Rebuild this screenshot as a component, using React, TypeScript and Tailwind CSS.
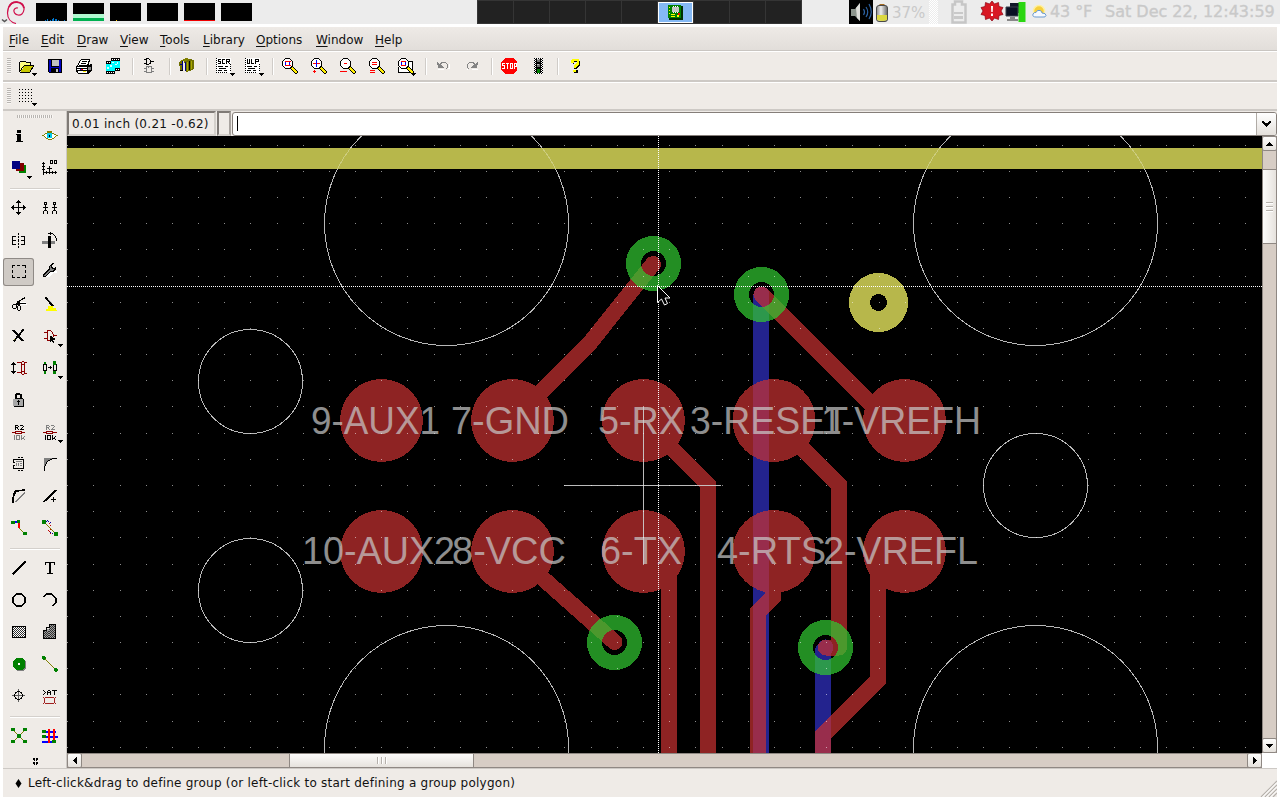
import React from "react";

/* A shape is [colour, path] for a fill or [colour, path, width] for a stroke. */
type Shape = [string, string, number?];

const K = "#000";
const G = "#008000";
const R = "#8b0000";
const N = "#000080";
const O = "#808000";

function Icon({ x, y, w, h, shapes }: { x: number; y: number; w: number; h: number; shapes: Shape[] }) {
  return (
    <svg width={w} height={h} viewBox={`${x} ${y} ${w} ${h}`} className="block shrink-0" shapeRendering="crispEdges" aria-hidden="true">
      {shapes.map(([c, d, s], i) =>
        s ? <path key={i} d={d} fill="none" stroke={c} strokeWidth={s} /> : <path key={i} d={d} fill={c} />
      )}
    </svg>
  );
}

const drop = (x: number, y: number): Shape => [K, `M${x} ${y}h5v1h-1v1h-1v1h-1v-1h-1v-1h-1z`];

const magnifier = (x: number): Shape[] => [
  ["#fff", `M${x + 3} 59h5l3 3v4l-3 3h-5l-3-3v-4z`],
  [K, `M${x + 3} 58.5h5M${x + 3} 68.5h5M${x + 0.5} 61v5M${x + 10.5} 61v5M${x + 1} 60.5h1M${x + 2} 59.5h1M${x + 8} 59.5h1M${x + 9} 60.5h1M${x + 1} 66.5h1M${x + 2} 67.5h1M${x + 8} 67.5h1M${x + 9} 66.5h1`, 1],
  [K, `M${x + 9.5} 67.5l6 6`, 3.6],
  ["#ffee00", `M${x + 10} 68l5 5`, 1.8],
];

/* Checkerboard of single pixels over a rectangle. */
const checker = (x: number, y: number, w: number, h: number) => {
  let d = "";
  for (let j = 0; j < h; j++) for (let i = j % 2; i < w; i += 2) d += `M${x + i} ${y + j}h1v1h-1z`;
  return d;
};

const topIcons: (Shape[] | null)[] = [
  [
    ["#ffff80", "M20 63l2-2h4l1 2h4v3h-7l-4 6z"],
    [K, "M19.5 62v10M20 61.5h6M26 62.5h5M30.5 63v3", 1],
    ["#c8c800", "M24 66h10l-4 7h-10z"],
    [K, "M24 65.5h10M20 72.5h10M33.5 66l-4 7M23.5 66l-4 6", 1],
    drop(32, 73),
  ],
  [
    [K, "M48 59h14v14h-13l-1-1z"],
    ["#0000c0", "M49 60h2v12h-2zM59 60h2v12h-2zM51 67h8v1h-8z"],
    ["#c0c0c0", "M52 60h7v6h-7zM56 69h2v3h-2z"],
    ["#000", "M52 69h4v4h-4z"],
  ],
  [
    ["#fff", "M81 59h9l-3 7h-9z"],
    [K, "M81 59.5h9M80.5 60l-3 6M89.5 60l-2 6M82 61.5h5M81 63.5h5", 1],
    [K, "M76 66h3v-1h9l4-1v6l-4 4h-10l-2-2z"],
    ["#fff", "M77 67h10v1h-10zM77 69h10v1h-10zM78 71h9v2h-9z"],
    ["#0000ff", "M80 69h1v1h-1z"],
    ["#f00", "M81 69h2v1h-2z"],
    ["#ffee00", "M83 71h3v1h-3z"],
    ["#888", "M88 67h3v3h-3z"],
  ],
  [
    [K, "M111 58h9v13h-9zM106 61h9v13h-9z"],
    ["#00ffff", "M111 61h9v7h-9zM106 64h9v7h-9z"],
    ["#d8ffff", "M112 62h2v1h-2zM117 62h1v2h-1zM115 64h2v1h-2zM110 65h2v2h-2zM107 67h2v2h-2z"],
    ["#fff", "M112 59h1v1h-1zM114 59h1v1h-1zM116 59h1v1h-1zM118 59h1v1h-1zM107 62h1v1h-1zM109 62h1v1h-1zM116 69h1v1h-1zM118 69h1v1h-1zM107 72h1v1h-1zM109 72h1v1h-1zM111 72h1v1h-1zM113 72h1v1h-1z"],
  ],
  null,
  [
    [K, "M146.5 58v7M146 58.5h3M146 64.5h3M150.5 59.5v4M149.5 59v1M149.5 63v1M144 59.5h2M144 63.5h2M151 61.5h3", 1],
    ["#808080", "M146.5 66.5v6h5v-6zM148.5 66v2M144 68.5h2M144 71.5h2M152 68.5h2M152 71.5h2", 1],
  ],
  null,
  [
    ["#707000", "M179 62l3-2v11l-2-1zM184 60l6-1v12l-4 1zM190 59l4 1v9l-4 2z"],
    ["#808000", "M180 61l6-3 4 1-4 2z"],
    ["#a8a800", "M187 62h1v9h-1zM191 61h1v8h-1z"],
    ["#000080", "M182 61h1v9h-1zM185 62h1v9h-1zM180 64h2v1h-2z"],
    [K, "M189.500 61v9M180 70.500h3", 1],
  ],
  null,
  [
    ["#fff", "M216 58h15v15h-15z"],
    [K, "M216 58h1v1h-1zM216 60h1v1h-1zM216 62h1v1h-1zM216 64h1v1h-1zM216 66h1v1h-1zM216 68h1v1h-1zM216 70h1v1h-1zM216 72h1v1h-1zM230 64h1v1h-1zM230 66h1v1h-1zM230 68h1v1h-1zM230 70h1v1h-1zM218 72h1v1h-1zM220 72h1v1h-1zM222 72h1v1h-1zM224 72h1v1h-1zM226 72h1v1h-1z"],
    [K, "M218 59h3v1h-2v1h2v3h-3v-1h2v-1h-2zM222 59h3v1h-2v3h2v1h-3zM226 59h4v3h-1v1h1v1h-1v-1h-1v-1h-1v2h-1z"],
    ["#fff", "M227 60h2v1h-2z"],
    [K, "M218 66h5v1h-5zM225 66h3v1h-3zM219 68h7v1h-7zM218 70h4v1h-4zM224 70h3v1h-3z"],
    drop(230, 73),
  ],
  [
    ["#fff", "M245 58h15v15h-15z"],
    [K, "M245 58h1v1h-1zM245 60h1v1h-1zM245 62h1v1h-1zM245 64h1v1h-1zM245 66h1v1h-1zM245 68h1v1h-1zM245 70h1v1h-1zM245 72h1v1h-1zM259 64h1v1h-1zM259 66h1v1h-1zM259 68h1v1h-1zM259 70h1v1h-1zM247 72h1v1h-1zM249 72h1v1h-1zM251 72h1v1h-1zM253 72h1v1h-1zM255 72h1v1h-1z"],
    [K, "M247 59h1v4h1v-4h1v5h-3zM251 59h1v4h2v1h-3zM255 59h4v3h-3v2h-1z"],
    ["#fff", "M256 60h2v1h-2z"],
    [K, "M247 66h5v1h-5zM254 66h3v1h-3zM248 68h7v1h-7zM247 70h4v1h-4zM253 70h3v1h-3z"],
    drop(259, 73),
  ],
  null,
  [...magnifier(282), ["#f00", "M285 61.500h6M285 65.500h6", 1], ["#00f", "M285.500 62v3M289.500 62v3", 1]],
  [...magnifier(311), ["#00f", "M316.500 60v7", 1], ["#f00", "M313 63.500h3M317 63.500h3M313 71.500h3M314.500 70v3", 1]],
  [...magnifier(340), ["#f00", "M344 63.500h3M340 71.500h7", 1]],
  [...magnifier(369), ["#f00", "M372 62.500h5M372 64.500h5M370 70.500h5M370 72.500h5", 1]],
  [
    ["#fff", "M405 61h8v11h-14v-4z"],
    [K, "M408 61.5h4.500v11M398.500 67v5.500h13", 1],
    ...magnifier(398),
    ["#f00", "M401 61.500h5M401 65.500h5", 1],
    ["#00f", "M401.500 62v3M405.500 62v3", 1],
    drop(411, 73),
  ],
  null,
  [
    ["#fff", "M438 69h6v1h-6zM449 64h1v5h-2v-1h1z"],
    ["#848484", "M437 62h1v1h1v1h1v-1h1v-1h5v1h1v1h1v4h-1v1h-1v-1h1v-4h-1v-1h-4v1h-1v1h1v1h1v1h1v1h-6z"],
  ],
  [
    ["#fff", "M472 69h6v1h-6zM467 69h1v1h-1z"],
    ["#848484", "M478 62h-1v1h-1v1h-1v-1h-1v-1h-5v1h-1v1h-1v4h1v1h1v-1h-1v-4h1v-1h4v1h1v1h-1v1h-1v1h-1v1h6z"],
  ],
  null,
  [
    ["#ff0000", "M505 58h8l4 4v8l-4 4h-8l-4-4v-8z"],
    ["#fff", "M502 63h3v1h-2v1h2v4h-3v-1h2v-2h-2zM506 63h3v1h-1v5h-1v-5h-1zM510 63h3v6h-3zM514 63h3v4h-2v2h-1z"],
    ["#ff0000", "M511 64h1v4h-1zM515 64h1v2h-1z"],
  ],
  [
    ["#fff", "M534 58h9v16h-9z"],
    [K, checker(534, 58, 9, 16) + "M536 59h5v14h-5z"],
    ["#707070", "M537 59h3v3h-3zM537 64h3v3h-3z"],
    ["#c0c0c0", "M537 59h2v1h-2zM537 64h2v1h-2z"],
    [G, "M537 69h3v4h-3z"],
  ],
  null,
  [
    [K, "M572 60h6l2 2v3l-3 3v1h-3v-2l3-3v-2h-3v2h-1zM574 70h4v3h-4z"],
    ["#ffff00", "M572 59h6l1 1v4l-3 3v1h-2v-3l3-2v-2h-3v2h-3v-2zM573 70h3v2h-3z"],
  ],
];

const leftIcons: (Shape[] | null)[][] = [
  [
    [[K, "M17 130h4v3h-4zM16 134h5v7h2v1h-7v-1h1v-6h-1z"]],
    [
      ["#fff", "M43 135l4-3h5l5 3-5 4h-5z"],
      [O, "M42 135.500h2M44 134.500h1M45 133.500h2M47 132.500h5M52 133.500h2M54 134.500h2M56 135.500h2M44 136.500h1M45 137.500h1M46 138.500h2M48 139.500h4M52 138.500h2M54 137.500h1M55 136.500h1M47 131.500h5", 1],
      ["#00c8e8", "M47 133h5v5h-5z"],
      [K, "M49 135h1v2h-1z"],
    ],
  ],
  [
    [[G, "M19 165h7v8h-7z"], ["#800000", "M16 163h8v8h-8z"], [N, "M12 161h8v8h-8z"], drop(27, 176)],
    [
      [K, "M43.500 162v13M43 172.500h14M42 163.500h3M42 166.500h3M42 169.500h3M46.500 171v3M49.500 171v3M52.500 171v3M55.500 171v3M47 168.500h5M49.500 166v5", 1],
      [K, "M50 160h3v4h-3zM54 160h3v4h-3z"],
      ["#efebe7", "M51 161h1v2h-1zM55 161h1v2h-1z"],
    ],
  ],
  [
    [[K, "M11 207.500h15M18.500 200v15M17 201.500h3M16 202.500h5M17 213.500h3M16 212.500h5M12.500 206v3M13.500 205v5M24.500 206v3M23.500 205v5", 1]],
    [
      [K, "M44 202h3v3h-3zM53 202h3v3h-3zM43 207h5v1h-5zM52 207h5v1h-5zM45 205h1v5h-1zM54 205h1v5h-1zM44 210h3v1h-3zM53 210h3v1h-3zM43 211h1v3h-1zM47 211h1v3h-1zM52 211h1v3h-1zM56 211h1v3h-1z"],
      ["#efebe7", "M45 203h1v1h-1zM54 203h1v1h-1z"],
    ],
  ],
  [
    [
      [K, "M12.500 236v9M12 236.500h4M13 240.500h3M12 244.500h4M24.500 236v9M21 236.500h4M21 240.500h3M21 244.500h4", 1],
      [K, "M18.500 233v2M18.500 236v2M18.500 239v3M18.500 243v2M18.500 246v2", 1],
    ],
    [
      ["#808080", "M42 241h13v3h-13z"],
      [K, "M48 236h3v12h-3z"],
      [K, "M48 233.500h5M50.500 232v3M53 234.500h1M54.500 235v1M55.500 236v2M56.500 238v3", 1],
    ],
  ],
  [
    [[K, "M12.500 265.500v12h13v-12z", 1], ["#cfcac5", "M15 265h2v1h-2zM20 265h2v1h-2zM15 277h2v1h-2zM20 277h2v1h-2zM12 268h1v2h-1zM12 273h1v2h-1zM25 268h1v2h-1zM25 273h1v2h-1z"]],
    [
      ["#fff", "M45 277h4l4-4h4v-2h-3l-4 2z"],
      [K, "M43 274l6-5v-3l3-3h2l-2 3v1l1 1h1l2-2v3l-2 3h-4l-5 5h-2z"],
      ["#808080", "M44 275l6-5v-4l1-1v3l1 1h2l-1 2h-3l-5 5h-1z"],
    ],
  ],
  [
    [
      ["#fff", "M20 302h6v1h-6zM21 304h6v1h-6z"],
      [K, "M17 302.500L25 297.500M18 303.500h8M16 303.500h4", 1.300],
      [K, "M13 304h5v1h-5zM12 305h1v3h-1zM13 308h3v1h-3zM16 305h1v3h-1zM18 304h2v2h-2zM17 306h1v4h-1zM18 310h2v1h-2zM20 306h1v4h-1zM17 301h3v4h-3z"],
    ],
    [
      [K, "M45.500 297.500l8 9", 2],
      ["#c0c0c0", "M48.500 299.500l4 4", 1],
      ["#ffff00", "M48 306h5v2h3v2h1v1h-11v-2h2z"],
    ],
  ],
  [
    [[K, "M13 330l10 11", 2], [K, "M23.500 329.500l-10 12", 2], [O, "M14 339h1v1h-1z"]],
    [
      [R, "M47.500 330v11M47 330.500h4M47 340.500h4M44 332.500h3M44 338.500h3M51 331.500h1M52.500 332v2M53.500 334v3M54 335.500h3", 1],
      [K, "M50 336h2v1h1v1h2v2h-2v1h1v2h-1v-1h-1v-1h-1v1h-1z"],
      drop(58, 344),
    ],
  ],
  [
    [
      [K, "M13.500 362v12M12 363.500h3M11 364.500h5M12 372.500h3M11 371.500h5", 1],
      [R, "M21.500 362v12M17 362.500h4M17 372.500h4M22 361.500h2M22 374.500h2M22 364.500h2M22 371.500h2M24.500 362v2M24.500 364v8M24.500 372v2M25 362.500h2M25 373.500h2", 1],
    ],
    [
      [K, "M43.500 364.500v6h3v-6zM53.500 364.500v6h3v-6zM48 367.500h4M50.500 366v3", 1],
      [G, "M44 362h2v2h-2zM44 371h2v3h-2zM53 361h3v4h-3zM53 371h3v3h-3z"],
      drop(58, 376),
    ],
  ],
  [
    [
      [K, "M15 394h1v-1h4v1h2v4h1v1h1v8h-10v-1h-1v-7h2z"],
      ["#efebe7", "M17 395h3v3h-3z"],
      ["#a8a8a8", "M13 399h10v7h-10z"],
      [K, "M18 400h1v5h-1zM17 401h3v1h-3z"],
    ],
    null,
  ],
  [
    [
      [K, "M15.500 425v5M15 425.500h3M18.500 426v1M15 427.500h3M17.500 428v1M18.500 429v1M20 425.500h3M23.500 426v1M22.500 427v1M21.500 428v1M20 429.500h4", 1],
      [R, "M12 432.500h3M15.500 431.500v2h6v-2zM22 432.500h3", 1],
      ["#808080", "M14.500 435v5M16.500 435.500v4h3v-4zM21.500 435v5M24.500 436v1M23.500 437v1M22 438.500h2M24.500 439v1", 1],
    ],
    [
      ["#808080", "M46.500 425v5M46 425.500h3M49.500 426v1M46 427.500h3M48.500 428v1M49.500 429v1M51 425.500h3M54.500 426v1M53.500 427v1M52.500 428v1M51 429.500h4", 1],
      [R, "M43 432.500h3M46.500 431.500v2h6v-2zM53 432.500h4", 1],
      [K, "M45.500 435v5M47.500 435.500v4h3v-4zM52.500 435v5M55.500 436v1M54.500 437v1M53 438.500h2M55.500 439v1", 1],
      drop(58, 440),
    ],
  ],
  [
    [
      [K, "M13.500 459.500v9h10v-9zM18 457.500h2M21 457.500h2M18 470.500h2M21 470.500h2M13 462.500h2M13 465.500h2", 1],
      ["#808080", "M16 461h6v1h-6zM16 463h1v3h-1zM18 463h1v3h-1zM20 463h2v1h-2zM20 465h2v1h-2z"],
      ["#efebe7", "M13 463h1v2h-1z"],
    ],
    [["#808080", "M44 458h11l-6 2-3 3-1 5h-1z"], [K, "M57 458.500h-5M52 459.500h-2M50 460.500h-2M47.500 461v1M46.500 462v2M45.500 464v2M44.500 466v5", 1]],
  ],
  [
    [["#808080", "M14 502l11-11v2l-9 9z"], [K, "M13 502v-3l1-5 2-3 9-1", 1.600], [K, "M12 500h2v3h-2zM14 491h2v3h-2zM23 489h2v2h-2z"]],
    [[K, "M43.500 502l13-12", 2], [K, "M51 499.500h5M53.500 497v5", 1]],
  ],
  [
    [["#0000ff", "M13 521h6v2h-6z"], ["#ff0000", "M18 522h2v6h-2z"], [O, "M19 528l6 6", 1.4], [G, "M11 521h4v3h-4zM17 520h3v3h-3zM23 532h4v3h-4z"]],
    [
      ["#0000a0", "M46 521h1v1h-1zM48 521h1v1h-1zM50 522h1v1h-1zM47 520h1v1h-1zM50 532h1v1h-1zM52 533h1v1h-1z"],
      ["#c00000", "M49 523h1v1h-1zM50 525h1v1h-1zM49 527h1v1h-1zM50 529h1v1h-1zM49 531h1v1h-1zM48 530h1v1h-1zM50 533h1v1h-1z"],
      [O, "M44 522l12 12", 1.4],
      [G, "M42 520h4v4h-4zM54 532h4v4h-4z"],
    ],
  ],
  [
    [[K, "M12.500 574.500l13-13", 2]],
    [[K, "M45 562h10v3h-1v-2h-3v10h2v1h-6v-1h2v-10h-3v2h-1z"]],
  ],
  [
    [[K, "M16.500 594h5l3.500 3.500v5l-3.500 3.500h-5l-3.500-3.500v-5z", 1.800]],
    [[K, "M43.500 597l3-3h5l4.500 4.500v4l-3.500 3.500", 1.800]],
  ],
  [
    [["#fff", "M13 627h12v10h-12z"], ["#303030", checker(13, 627, 12, 10)], [K, "M12.500 626.500h13v11h-13z", 1]],
    [["#a0a0a0", "M44 631h2v-2h3v-4h6v13h-11z"], ["#303030", checker(49, 625, 6, 13) + checker(44, 631, 5, 7)], [K, "M43.500 638.500v-8h3v-3h3v-3h6v14z", 1]],
  ],
  [
    [["#808080", "M16 659h8l2 3v6l-3 3h-6z"], [G, "M16 658h6l3 3v6l-3 3h-6l-3-3v-6z"], ["#fff", "M18 663h2v2h-2z"]],
    [[O, "M44 658l12 12", 1.4], [G, "M42 656h3v1h1v2h-1v1h-2v-1h-1zM54 668h3v1h1v2h-1v1h-2v-1h-1z"]],
  ],
  [
    [["#606060", "M12 695.500h13M18.500 689v13", 1], [K, "M17 691.500h3M17 699.500h3M14.500 694v3M22.500 694v3M15.500 692v2M16 692.500h1M21.500 692v2M20 692.500h1M15.500 697v2M16 698.500h1M21.500 697v2M20 698.500h1", 1]],
    [
      [K, "M43 690.500h1M44 691.500h1M45.500 692v1M44 693.500h1M43 694.500h1M47.500 691v4M50.500 691v4M48 690.500h2M48 692.500h2M52 690.500h5M54.500 690v5", 1],
      ["#a02020", "M45 697h9v1h-9zM44 698h1v5h-1zM54 698h1v5h-1zM45 703h9v1h-9zM43 697h1v1h-1zM55 697h1v1h-1zM43 703h1v1h-1zM55 703h1v1h-1z"],
    ],
  ],
  [
    [[O, "M13 730l12 12M25 730l-12 12", 1.2], [G, "M11 728h4v3h-4zM23 728h4v3h-4zM17 734h4v4h-4zM11 740h4v3h-4zM23 740h4v3h-4z"]],
    [
      ["#0000ff", "M44 731h12v2h-12zM44 736h14v2h-14zM42 741h14v2h-14z"],
      ["#ff0000", "M48 729h2v14h-2zM53 729h2v14h-2z"],
      [G, "M42 730h4v3h-4zM42 735h4v3h-4zM52 740h4v3h-4z"],
    ],
  ],
];

const menus: [string, string, string][] = [
  ["F", "ile", "w-8"],
  ["E", "dit", "w-9"],
  ["D", "raw", "w-[43px]"],
  ["V", "iew", "w-10"],
  ["T", "ools", "w-[43px]"],
  ["L", "ibrary", "w-[53px]"],
  ["O", "ptions", "w-[60px]"],
  ["W", "indow", "w-[59px]"],
  ["H", "elp", "w-10"],
];

function Monitor({ children }: { children?: React.ReactNode }) {
  return (
    <svg width="31" height="18" viewBox="0 0 31 18" className="block bg-black" shapeRendering="crispEdges">
      {children}
    </svg>
  );
}

function Panel() {
  return (
    <header className="flex h-6 w-full shrink-0 bg-[#ececec]">
      <div className="flex w-[36px] shrink-0">
        <svg width="36" height="24" viewBox="0 0 36 24" className="block">
          <path d="M2 19.500l2.500 2 2.500-2" fill="none" stroke="#555" strokeWidth="1.600" />
          <path d="M16 23.500c-5-1-8.500-5-8.500-10.500 0-7 4.500-11.500 9.500-11 5 .5 7.500 4 7 7.500-.5 4-3 6-6 5.500-3-.5-4.500-3-4-5 .5-1.500 2-2.500 4-2" fill="none" stroke="#d0104c" strokeWidth="1.200" />
          <path d="M9 7c1-2.500 4-5 8-4.800 4 .5 6.500 3 7 6" fill="none" stroke="#d0104c" strokeWidth="1.800" />
        </svg>
      </div>
      <div className="flex w-[441px] shrink-0 gap-1.5 pt-[3px]">
        <Monitor>
          <path d="M9 17h1v1h-1zM11 16h1v2h-1zM14 17h1v1h-1zM16 16h1v2h-1zM17 15h1v3h-1zM19 16h2v2h-2zM22 17h1v1h-1zM28 17h1v1h-1z" fill="#0078d0" />
        </Monitor>
        <Monitor>
          <path d="M0 11h31v4h-31z" fill="#b0f8d0" />
          <path d="M0 15h31v3h-31z" fill="#00b050" />
        </Monitor>
        <Monitor>
          <path d="M6 17h1v1h-1z" fill="#ffc800" />
        </Monitor>
        <Monitor />
        <Monitor>
          <path d="M0 17h31v1h-31z" fill="#f00000" />
        </Monitor>
        <Monitor />
      </div>
      <div className="grid w-[325px] shrink-0 grid-cols-9 gap-px border border-[#353535] bg-[#353535]">
        {Array.from({ length: 9 }, (_, i) =>
          i === 5 ? (
            <div key={i} className="mt-px flex items-center justify-center border border-white bg-[#85b9f5] pr-px pb-px">
              <svg width="15" height="15" viewBox="0 0 15 15" shapeRendering="crispEdges">
                <path d="M1 1h14v14h-14z" fill="#003000" />
                <path d="M0 0h13v13h-13z" fill="#008000" />
                <path d="M4 2h7v5h-7z" fill="#c8c8c8" />
                <path d="M5 1h1v1h-1zM7 1h1v1h-1zM9 1h1v1h-1zM5 7h1v1h-1zM7 7h1v1h-1zM9 7h1v1h-1z" fill="#fff" />
                <path d="M1 2h1v1h-1zM1 5h1v1h-1zM1 8h1v1h-1zM3 9h4v1h-4zM3 11h4v1h-4zM9 10h2v2h-2z" fill="#ffff00" />
                <path d="M10 8h2v2h-2z" fill="#f00" />
              </svg>
            </div>
          ) : (
            <div key={i} className="bg-[#222222]" />
          )
        )}
      </div>
      <div className="flex grow pl-[47px] text-[#c9c9c9]">
        <svg width="43" height="24" viewBox="849 0 43 24" className="block shrink-0">
          <defs>
            <linearGradient id="cell" x1="0" x2="1">
              <stop offset="0" stopColor="#888" />
              <stop offset=".4" stopColor="#eee" />
              <stop offset="1" stopColor="#666" />
            </linearGradient>
          </defs>
          <path d="M849 0h24v24h-24z" fill="#000" />
          <path d="M851 9h4l5-6v18l-5-5h-4z" fill="#8c948c" />
          <path d="M856 8l4-5v18l-3-3z" fill="#dcdcd8" />
          <path d="M863.500 9q2 3 0 6M866 7q3.500 5 0 10M869 4q4.500 8 0 15" fill="none" stroke="#2c62a4" strokeWidth="1.200" />
          <path d="M879.500 4h5v2h-5z" fill="#a46a20" />
          <rect x="876.500" y="5.500" width="11" height="16" rx="2.500" fill="url(#cell)" stroke="#4a4a4a" />
          <path d="M877 15h10v5q-5 2-10 0z" fill="#dcd840" />
        </svg>
        <span className="w-[37px] shrink-0 text-[15px] leading-[26px]">37%</span>
        <svg width="121" height="24" viewBox="929 0 121 24" className="block shrink-0">
          <defs>
            <pattern id="checks" width="2" height="2" patternUnits="userSpaceOnUse">
              <path d="M0 0h1v1h-1zM1 1h1v1h-1z" fill="#fff" />
            </pattern>
          </defs>
          <path d="M929 0h9v24h-9z" fill="url(#checks)" shapeRendering="crispEdges" />
          <path d="M955 1.500h7v3h3.500v18h-13v-18h2.500z" fill="none" stroke="#c6c6c6" strokeWidth="2.500" />
          <path d="M954 12h9v2h-9zM954 16h9v3h-9z" fill="#c9c9c9" />
          <path d="M992 1l2.500 3 4-1.500.500 4 4 1-2 3.500 2 3.500-4 1-.5 4-4-1.500-2.500 3-2.500-3-4 1.500-.500-4-4-1 2-3.500-2-3.500 4-1 .5-4 4 1.500z" fill="#d81824" stroke="#8c0010" strokeWidth=".7" />
          <path d="M991 6h2l-.3 6h-1.400zM991 13.500h2v2.500h-2z" fill="#fff" />
          <path d="M1010 3h11v10h-11z" fill="#101828" />
          <path d="M1006 7h12v9h-12z" fill="#0a1024" stroke="#38404c" />
          <path d="M1010 17h5v2h3v2h-11v-2h3z" fill="#888" />
          <path d="M1018.500 2h7v20h-7z" fill="#2bd612" />
          <circle cx="1039" cy="11" r="5.500" fill="#f6cf3c" stroke="#fff0a0" strokeWidth="1.500" />
          <path d="M1036 17q-4 0-3-3 1-2 3-1.500 1-3 4-2 2 .5 2 2.500 4 0 4 2.500-.5 2-3 1.500z" fill="#f5f9ff" stroke="#6a9ad0" />
        </svg>
        <span className="w-[55px] shrink-0 whitespace-nowrap text-[16px] leading-6 tracking-[-0.1px] [-webkit-text-stroke:0.35px_#c9c9c9]">43 °F</span>
        <span className="shrink-0 whitespace-nowrap text-[16px] leading-6 [-webkit-text-stroke:0.35px_#c9c9c9]">Sat Dec 22, 12:43:59</span>
      </div>
    </header>
  );
}

function Handle() {
  return (
    <div className="flex w-[9px] shrink-0 items-center justify-end">
      <div className="mr-px h-[16px] w-1 bg-[repeating-linear-gradient(#b9b5b1_0_1px,#f8f6f4_1px_2px)]" />
    </div>
  );
}

function MainToolbar() {
  let x = 12;
  return (
    <div className="flex h-[30px] shrink-0 border-b-2 border-b-[#cdc9c5] bg-[#efebe7]">
      <Handle />
      {topIcons.map((shapes, i) => {
        if (!shapes) {
          x += 8;
          return (
            <div key={i} className="flex w-2 shrink-0 items-center justify-center pl-0.5">
              <div className="h-[17px] w-0.5 border-r border-r-white bg-[#d0ccc8]" />
            </div>
          );
        }
        const left = x;
        x += 29;
        return <Icon key={i} x={left} y={52} w={29} h={28} shapes={shapes} />;
      })}
    </div>
  );
}

function GridToolbar() {
  const dots: string[] = [];
  for (let r = 0; r < 5; r++) for (let c = 0; c < 5; c++) dots.push(`M${19 + c * 3} ${89 + r * 3}h1v1h-1z`);
  return (
    <div className="flex h-[29px] shrink-0 border-b-2 border-b-[#cdc9c5] bg-[#efebe7] shadow-[inset_0_1px_0_#fff]">
      <Handle />
      <Icon x={12} y={82} w={29} h={27} shapes={[[K, dots.join("")], drop(32, 103)]} />
    </div>
  );
}

function Divider() {
  return (
    <div className="flex h-2 items-center justify-center pt-0.5">
      <div className="h-0.5 w-[50px] border-b border-b-white bg-[#d4d0cc]" />
    </div>
  );
}

function Palette() {
  let y = 120;
  return (
    <aside className="flex w-16 shrink-0 flex-col border-r border-r-[#cdc9c5] bg-[#efebe7]">
      <div className="flex h-[9px] items-center justify-center">
        <div className="mt-0.5 h-[3px] w-9 bg-[repeating-linear-gradient(90deg,#b9b5b1_0_1px,#f8f6f4_1px_2px)]" />
      </div>
      {leftIcons.map((row, r) => {
        const gap = r === 2 || r === 13 || r === 18;
        if (gap) y += 8;
        const top = y;
        y += 32;
        return (
          <React.Fragment key={r}>
            {gap && <Divider />}
            <div className="flex h-8 shrink-0 items-center">
              {row.map((shapes, c) => {
                const pressed = r === 4 && c === 0;
                return (
                  <div
                    key={c}
                    className={pressed ? "h-7 w-[31px] rounded-[3px] bg-[#cfcac5] shadow-[inset_0_0_0_1px_#8f8a86]" : "h-8 w-[31px]"}
                  >
                    {shapes && <Icon x={c === 0 ? 3 : 34} y={pressed ? top + 2 : top} w={31} h={pressed ? 28 : 32} shapes={shapes} />}
                  </div>
                );
              })}
            </div>
          </React.Fragment>
        );
      })}
      <div className="flex grow justify-center">
        <Icon x={27} y={752} w={16} h={16} shapes={[[K, "M33 758h2v1h1v1h-1v1h-1v-1h-1zM38 758h-2v1h-1v1h1v1h1v-1h1zM33 762h2v1h1v1h-1v1h-1v-1h-1zM38 762h-2v1h-1v1h1v1h1v-1h1z"]]} />
      </div>
    </aside>
  );
}

const PADS = [381.5, 512.5, 643.5, 774, 904.5];
const VIAS = [
  [653.5, 263.5],
  [761.5, 294.5],
  [614.5, 642.5],
  [825.5, 647.5],
];
const RINGS = [
  [446.5, 223.5, 122],
  [1035.5, 223.5, 122],
  [446.5, 747.5, 122],
  [1035.5, 747.5, 122],
  [250.5, 381.5, 52],
  [250.5, 590.5, 52],
  [1035.5, 485.5, 52],
];
const LABELS: [string, number, number, number][] = [
  ["9-AUX1", 311, 129, 434],
  ["7-GND", 451, 118, 434],
  ["5-RX", 598, 86, 434],
  ["3-RESET", 690, 158, 434],
  ["1-VREFH", 821, 160, 434],
  ["10-AUX2", 302, 153, 564],
  ["8-VCC", 452, 114, 564],
  ["6-TX", 600, 82, 564],
  ["4-RTS", 717, 109, 564],
  ["2-VREFL", 823, 155, 564],
];

function Board() {
  const dots: string[] = [];
  for (let i = -22; i <= 23; i++)
    for (let j = -13; j <= 10; j++)
      dots.push(`M${Math.floor(643.5 + i * 26.17)} ${Math.floor(485.5 + j * 26.17)}h1v1h-1z`);
  return (
    <svg width="1195" height="617" viewBox="67 136 1195 617" className="block shrink-0 bg-black" shapeRendering="crispEdges">
      <g fill="none" stroke="#3232c8" strokeWidth="16" strokeLinecap="round" opacity=".71">
        <path d="M761.500 294.500L761 300V770" />
        <path d="M825.500 647.500L823 651V770" />
      </g>
      <g opacity=".71" stroke="#c83232" fill="none" strokeWidth="16" strokeLinecap="round">
        <path d="M653 264L589.500 343.500L512.500 420.500" />
        <path d="M761.500 294.500L887 420" />
        <path d="M643.500 420L708 484.500V770" />
        <path d="M774 420L839 485V647.500" />
        <path d="M839 647.500H825.700" />
        <path d="M512.500 551.500L614.500 642" />
        <path d="M669 575V770" />
        <path d="M773 575V597L758 612V770" />
        <path d="M878 570V680L823 735V770" />
        {PADS.map((x) => (
          <g key={x} fill="#c83232" stroke="none">
            <circle cx={x} cy="420.500" r="41.500" />
            <circle cx={x} cy="551.500" r="41.500" />
          </g>
        ))}
      </g>
      <g opacity=".71" fill="none" stroke="#32c832" strokeWidth="15">
        {VIAS.map(([x, y]) => (
          <circle key={x} cx={x} cy={y} r="20" />
        ))}
      </g>
      <circle cx="878.500" cy="302.500" r="19" fill="none" stroke="#b7b74b" strokeWidth="21" />
      <path d="M67 148h1195v21h-1195z" fill="#b7b74b" />
      <g fill="none" stroke="#fff" strokeWidth="1" opacity=".72">
        {RINGS.map(([x, y, r]) => (
          <circle key={`${x}-${y}`} cx={x} cy={y} r={r} />
        ))}
      </g>
      <path d="M67 148h1195v21h-1195z" fill="#b7b74b" opacity=".6" />
      <g opacity=".71" fill="#c8c8c8" fontFamily='"Liberation Sans", sans-serif' fontSize="38.500">
        {LABELS.map(([t, x, w, y]) => (
          <text key={t} x={x} y={y} textLength={w} lengthAdjust="spacingAndGlyphs">
            {t}
          </text>
        ))}
      </g>
      <path d="M564 485.500h157M643.500 407v157" stroke="#d0d0d0" opacity=".9" />
      <path d={dots.join("")} fill="#fff" opacity=".55" />
      <path d="M658.500 136v617M67 286.500h1195" stroke="#fff" strokeDasharray="1 1" />
      <path d="M657.500 285.500v17l4-3.500 3 6 3-1.500-2.500-5.500h5z" fill="#000" stroke="#fff" shapeRendering="auto" />
    </svg>
  );
}

function ScrollButton({ d }: { d: string }) {
  return (
    <div className="flex size-[15px] shrink-0 items-center justify-center rounded-[2px] border border-[#8f8883] bg-linear-to-b from-[#fdfcfb] to-[#e6e2dd]">
      <svg width="9" height="9" viewBox="0 0 9 9" className="block" shapeRendering="crispEdges">
        <path d={d} fill="#000" />
      </svg>
    </div>
  );
}

function CommandBar() {
  return (
    <div className="flex h-[25px] shrink-0 bg-[#efebe7] text-[12px]">
      <div className="w-[149px] shrink-0 border-2 border-t-[#7f7a76] border-r-[#d4d0cb] border-b-[#d4d0cb] border-l-[#7f7a76] pl-[3px] leading-[22px] tracking-[0.29px] whitespace-nowrap text-[#111]">
        0.01 inch (0.21 -0.62)
      </div>
      <div className="ml-px w-3.5 shrink-0 border-2 border-t-[#7f7a76] border-r-[#a8a39f] border-b-[#d4d0cb] border-l-[#7f7a76]" />
      <div className="mt-px ml-px flex h-6 grow rounded-[3px] border border-[#857e79] bg-white">
        <div className="grow py-[3px] pl-1">
          <div className="h-[15px] w-px bg-black" />
        </div>
        <div className="flex w-[20px] items-center justify-center rounded-r-[2px] border-l border-l-[#b0aba6] bg-linear-to-b from-white to-[#e4e0db]">
          <svg width="9" height="6" viewBox="0 0 9 6" shapeRendering="crispEdges">
            <path d="M0 0h2v1h1v1h3v-1h1v-1h2v2h-1v1h-1v1h-1v1h-1v1h-1v-1h-1v-1h-1v-1h-1v-1h-1z" fill="#000" />
          </svg>
        </div>
      </div>
    </div>
  );
}

export default function App() {
  return (
    <div className="flex h-[800px] w-[1280px] flex-col overflow-hidden bg-white font-['DejaVu_Sans',sans-serif]">
      <Panel />
      <div className="mt-[3px] mr-[3px] ml-[3px] flex h-[770px] flex-col">
        <nav className="flex h-6 shrink-0 border-b border-b-[#c9c5c1] bg-linear-to-b from-[#eeeae6] to-[#e2deda] pl-1.5 text-[12px] leading-[27px] text-[#111]">
          {menus.map(([k, rest, w]) => (
            <span key={k} className={`${w} shrink-0`}>
              <span className="underline underline-offset-2">{k}</span>
              {rest}
            </span>
          ))}
        </nav>
        <div className="h-px shrink-0 bg-white" />
        <MainToolbar />
        <GridToolbar />
        <div className="flex h-[657px] shrink-0">
          <Palette />
          <div className="flex grow flex-col">
            <CommandBar />
            <div className="flex h-[617px] shrink-0">
              <Board />
              <div className="flex w-[15px] flex-col border-x border-x-[#8f8883] bg-[#d7cdc5]">
                <div className="-mx-px flex flex-col">
                  <ScrollButton d="M4 3h1v1h1v1h1v1h1v1h-7v-1h1v-1h1v-1h1z" />
                </div>
                <div className="mt-[18px] flex h-[75px] flex-col items-center justify-center gap-0.5 border-y border-y-[#8f8883] bg-linear-to-r from-[#fdfcfb] to-[#e6e2dd]">
                  <div className="h-0.5 w-[7px] border-b border-b-white bg-[#b5b0ab]" />
                  <div className="h-0.5 w-[7px] border-b border-b-white bg-[#b5b0ab]" />
                  <div className="h-0.5 w-[7px] border-b border-b-white bg-[#b5b0ab]" />
                </div>
                <div className="-mx-px mt-auto flex flex-col">
                  <ScrollButton d="M1 3h7v1h-1v1h-1v1h-1v1h-1v-1h-1v-1h-1v-1h-1z" />
                </div>
              </div>
            </div>
            <div className="flex h-[15px] w-[1195px] shrink-0 border-y border-y-[#8f8883] bg-[#d7cdc5]">
              <div className="-my-px flex">
                <ScrollButton d="M3 4h1v-1h1v-1h1v-1h1v7h-1v-1h-1v-1h-1v-1h-1z" />
              </div>
              <div className="ml-[207px] flex w-[185px] items-center justify-center gap-0.5 border-x border-x-[#8f8883] bg-linear-to-b from-[#fdfcfb] to-[#e6e2dd]">
                <div className="h-[7px] w-0.5 border-r border-r-white bg-[#b5b0ab]" />
                <div className="h-[7px] w-0.5 border-r border-r-white bg-[#b5b0ab]" />
                <div className="h-[7px] w-0.5 border-r border-r-white bg-[#b5b0ab]" />
              </div>
              <div className="-my-px ml-auto flex">
                <ScrollButton d="M3 1h1v1h1v1h1v1h1v1h-1v1h-1v1h-1v1h-1z" />
              </div>
            </div>
          </div>
        </div>
        <footer className="flex h-[29px] shrink-0 items-center justify-between border-t border-t-[#cdc9c5] bg-[#efebe7] pl-3 text-[12px] text-[#111]">
          <div className="flex items-center gap-1.5">
            <svg width="7" height="9" viewBox="0 0 7 9">
              <path d="M3.500 0L6.500 4.500L3.500 9L.5 4.500z" fill="#000" />
            </svg>
            <span className="tracking-[0.235px] whitespace-nowrap">Left-click&amp;drag to define group (or left-click to start defining a group polygon)</span>
          </div>
          <svg width="17" height="17" viewBox="0 0 17 17" className="self-end">
            <path d="M1 17L17 1M5 17L17 5M9 17L17 9M13 17L17 13" stroke="#b5b0ab" strokeWidth="1.200" />
            <path d="M2.500 17L17 2.500M6.500 17L17 6.500M10.500 17L17 10.500" stroke="#fff" />
          </svg>
        </footer>
      </div>
    </div>
  );
}
